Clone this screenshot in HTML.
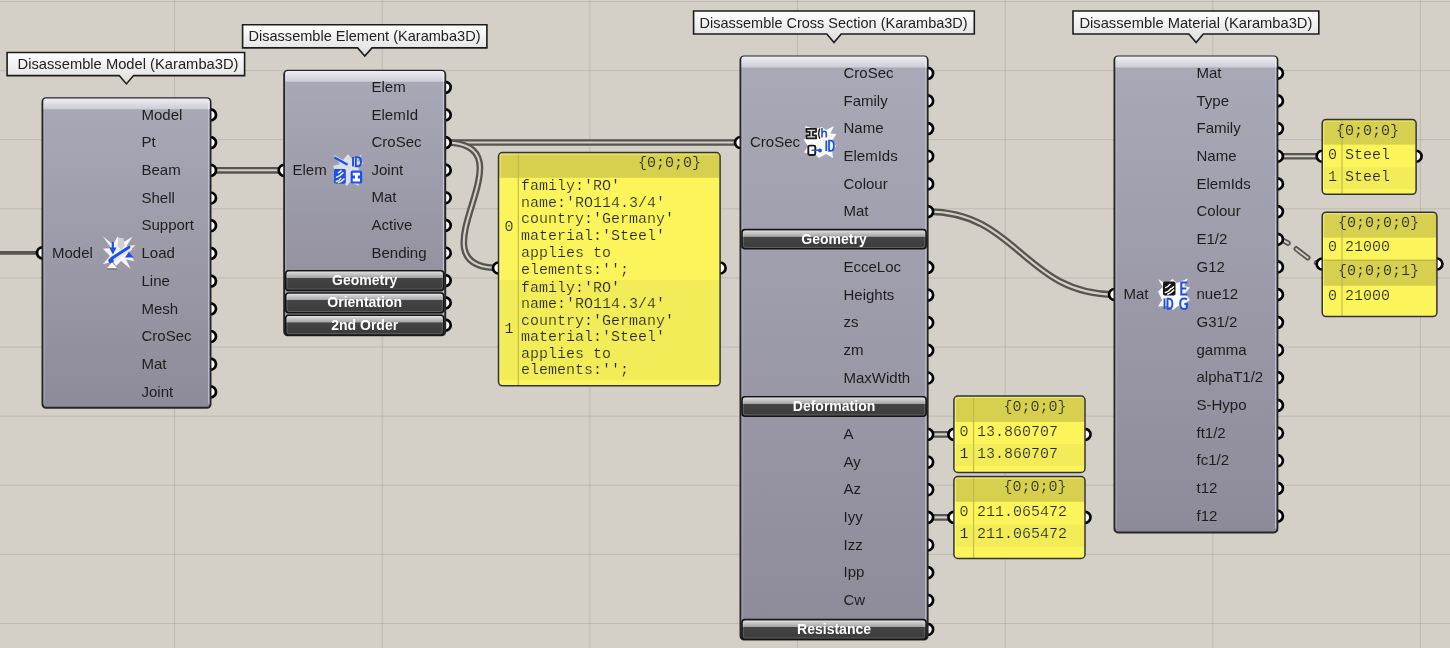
<!DOCTYPE html><html><head><meta charset="utf-8"><style>html,body{margin:0;padding:0;background:#d4d0c8;overflow:hidden}svg{display:block;will-change:transform}text{font-family:"Liberation Sans",sans-serif}.m{font-family:"Liberation Mono",monospace}</style></head><body>
<svg width="1450" height="648" viewBox="0 0 1450 648">
<defs>
<linearGradient id="tip" x1="0" y1="0" x2="0" y2="1"><stop offset="0" stop-color="#ffffff"/><stop offset="1" stop-color="#dcdcdc"/></linearGradient>
<linearGradient id="btn" x1="0" y1="0" x2="0" y2="1"><stop offset="0" stop-color="#e6e6e6"/><stop offset="0.36" stop-color="#a4a4a4"/><stop offset="0.37" stop-color="#444444"/><stop offset="1" stop-color="#3b3b3b"/></linearGradient>
<linearGradient id="hl" x1="0" y1="0" x2="0" y2="1"><stop offset="0" stop-color="#ededf1"/><stop offset="1" stop-color="#cdccd7"/></linearGradient>
</defs>
<rect width="1450" height="648" fill="#d4d0c8"/>
<rect x="174.00" y="0" width="1" height="648" fill="#000" fill-opacity="0.105"/>
<rect x="381.67" y="0" width="1" height="648" fill="#000" fill-opacity="0.105"/>
<rect x="589.34" y="0" width="1" height="648" fill="#000" fill-opacity="0.105"/>
<rect x="797.01" y="0" width="1" height="648" fill="#000" fill-opacity="0.105"/>
<rect x="1004.68" y="0" width="1" height="648" fill="#000" fill-opacity="0.105"/>
<rect x="1212.35" y="0" width="1" height="648" fill="#000" fill-opacity="0.105"/>
<rect x="1420.02" y="0" width="1" height="648" fill="#000" fill-opacity="0.105"/>
<rect x="0" y="1.00" width="1450" height="1" fill="#000" fill-opacity="0.105"/>
<rect x="0" y="70.11" width="1450" height="1" fill="#000" fill-opacity="0.105"/>
<rect x="0" y="139.22" width="1450" height="1" fill="#000" fill-opacity="0.105"/>
<rect x="0" y="208.33" width="1450" height="1" fill="#000" fill-opacity="0.105"/>
<rect x="0" y="277.44" width="1450" height="1" fill="#000" fill-opacity="0.105"/>
<rect x="0" y="346.55" width="1450" height="1" fill="#000" fill-opacity="0.105"/>
<rect x="0" y="415.66" width="1450" height="1" fill="#000" fill-opacity="0.105"/>
<rect x="0" y="484.77" width="1450" height="1" fill="#000" fill-opacity="0.105"/>
<rect x="0" y="553.88" width="1450" height="1" fill="#000" fill-opacity="0.105"/>
<rect x="0" y="622.99" width="1450" height="1" fill="#000" fill-opacity="0.105"/>
<path d="M0.00 252.80 C21.25 252.80 21.25 252.80 42.50 252.80" fill="none" stroke="#57554f" stroke-width="3.8"/>
<path d="M210.50 170.30 C247.35 170.30 247.35 170.30 284.20 170.30" fill="none" stroke="#57554f" stroke-width="6.7" stroke-linecap="round"/>
<path d="M210.50 170.30 C247.35 170.30 247.35 170.30 284.20 170.30" fill="none" stroke="#d4d0c8" stroke-width="2.1" stroke-linecap="round"/>
<path d="M445.20 142.50 C592.85 142.50 592.85 142.50 740.50 142.50" fill="none" stroke="#57554f" stroke-width="6.7" stroke-linecap="round"/>
<path d="M445.20 142.50 C592.85 142.50 592.85 142.50 740.50 142.50" fill="none" stroke="#d4d0c8" stroke-width="2.1" stroke-linecap="round"/>
<path d="M445.20 142.50 C537.20 142.50 406.50 268.00 498.50 268.00" fill="none" stroke="#57554f" stroke-width="6.7" stroke-linecap="round"/>
<path d="M445.20 142.50 C537.20 142.50 406.50 268.00 498.50 268.00" fill="none" stroke="#d4d0c8" stroke-width="2.1" stroke-linecap="round"/>
<path d="M927.60 211.55 C1017.60 211.55 1024.50 294.50 1114.50 294.50" fill="none" stroke="#57554f" stroke-width="6.7" stroke-linecap="round"/>
<path d="M927.60 211.55 C1017.60 211.55 1024.50 294.50 1114.50 294.50" fill="none" stroke="#d4d0c8" stroke-width="2.1" stroke-linecap="round"/>
<path d="M927.60 434.40 C947.60 434.40 933.90 434.40 953.90 434.40" fill="none" stroke="#57554f" stroke-width="6.7" stroke-linecap="round"/>
<path d="M927.60 434.40 C947.60 434.40 933.90 434.40 953.90 434.40" fill="none" stroke="#d4d0c8" stroke-width="2.1" stroke-linecap="round"/>
<path d="M927.60 517.35 C947.60 517.35 933.90 517.35 953.90 517.35" fill="none" stroke="#57554f" stroke-width="6.7" stroke-linecap="round"/>
<path d="M927.60 517.35 C947.60 517.35 933.90 517.35 953.90 517.35" fill="none" stroke="#d4d0c8" stroke-width="2.1" stroke-linecap="round"/>
<path d="M1277.40 156.24 C1299.80 156.24 1299.80 156.24 1322.20 156.24" fill="none" stroke="#57554f" stroke-width="6.7" stroke-linecap="round"/>
<path d="M1277.40 156.24 C1299.80 156.24 1299.80 156.24 1322.20 156.24" fill="none" stroke="#d4d0c8" stroke-width="2.1" stroke-linecap="round"/>
<path d="M1277.40 239.30 C1290.40 239.30 1309.20 264.00 1322.20 264.00" fill="none" stroke="#57554f" stroke-width="5.4" stroke-dasharray="14.4 10.1" stroke-dashoffset="3" stroke-linecap="round"/>
<path d="M1277.40 239.30 C1290.40 239.30 1309.20 264.00 1322.20 264.00" fill="none" stroke="#d4d0c8" stroke-width="1.9" stroke-dasharray="14.4 10.1" stroke-dashoffset="3" stroke-linecap="round"/>
<linearGradient id="body1" x1="0" y1="0" x2="0" y2="1"><stop offset="0" stop-color="#aaa9b7"/><stop offset="1" stop-color="#8d8b99"/></linearGradient>
<circle cx="210.50" cy="114.90" r="5.5" fill="#fff" stroke="#000" stroke-width="2.7"/>
<circle cx="210.50" cy="142.60" r="5.5" fill="#fff" stroke="#000" stroke-width="2.7"/>
<circle cx="210.50" cy="170.30" r="5.5" fill="#fff" stroke="#000" stroke-width="2.7"/>
<circle cx="210.50" cy="198.00" r="5.5" fill="#fff" stroke="#000" stroke-width="2.7"/>
<circle cx="210.50" cy="225.70" r="5.5" fill="#fff" stroke="#000" stroke-width="2.7"/>
<circle cx="210.50" cy="253.40" r="5.5" fill="#fff" stroke="#000" stroke-width="2.7"/>
<circle cx="210.50" cy="281.10" r="5.5" fill="#fff" stroke="#000" stroke-width="2.7"/>
<circle cx="210.50" cy="308.80" r="5.5" fill="#fff" stroke="#000" stroke-width="2.7"/>
<circle cx="210.50" cy="336.50" r="5.5" fill="#fff" stroke="#000" stroke-width="2.7"/>
<circle cx="210.50" cy="364.20" r="5.5" fill="#fff" stroke="#000" stroke-width="2.7"/>
<circle cx="210.50" cy="391.90" r="5.5" fill="#fff" stroke="#000" stroke-width="2.7"/>
<circle cx="42.50" cy="252.80" r="5.5" fill="#fff" stroke="#000" stroke-width="2.7"/>
<rect x="42.50" y="98.30" width="168.00" height="309.50" rx="3.5" fill="url(#body1)" stroke="#262626" stroke-width="2"/>
<path d="M43.40 109.30 v-8.20 q0 -2.6 2.6 -2.6 h161.00 q2.6 0 2.6 2.6 v8.20 z" fill="url(#hl)"/>
<rect x="43.50" y="109.30" width="1" height="294.50" fill="#c8c7d4" opacity="0.6"/>
<rect x="208.10" y="109.30" width="1.3" height="294.50" fill="#c6c5d3" opacity="0.85"/>
<rect x="208.10" y="100.80" width="1.3" height="8.5" fill="#f0f0f4" opacity="0.85"/>
<text x="141.50" y="119.60" font-size="15" fill="#1e1e1e">Model</text>
<text x="141.50" y="147.30" font-size="15" fill="#1e1e1e">Pt</text>
<text x="141.50" y="175.00" font-size="15" fill="#1e1e1e">Beam</text>
<text x="141.50" y="202.70" font-size="15" fill="#1e1e1e">Shell</text>
<text x="141.50" y="230.40" font-size="15" fill="#1e1e1e">Support</text>
<text x="141.50" y="258.10" font-size="15" fill="#1e1e1e">Load</text>
<text x="141.50" y="285.80" font-size="15" fill="#1e1e1e">Line</text>
<text x="141.50" y="313.50" font-size="15" fill="#1e1e1e">Mesh</text>
<text x="141.50" y="341.20" font-size="15" fill="#1e1e1e">CroSec</text>
<text x="141.50" y="368.90" font-size="15" fill="#1e1e1e">Mat</text>
<text x="141.50" y="396.60" font-size="15" fill="#1e1e1e">Joint</text>
<text x="52.00" y="257.50" font-size="15" fill="#1e1e1e">Model</text>
<polygon points="102.9,236.6 113,244.5 117.8,236.2 121.5,243.5 132.6,236.6 126.5,246 135.7,245.3 128,251.5 134.5,261 126,259.5 130.7,269 121,261 116,266 113.5,262 102.9,264 110,256 102.9,248.7 111,248" fill="#fff" opacity="0.9"/>
<polygon points="118.5,238 123.5,238 124.5,246 121,250 117.5,246" fill="#d0d0d4"/>
<line x1="112.8" y1="242" x2="112.8" y2="249" stroke="#1c4ff2" stroke-width="2.2"/>
<polygon points="109.2,247.6 116.6,247.6 112.9,254.4" fill="#1c4ff2"/>
<line x1="112" y1="260" x2="129.5" y2="248.5" stroke="#e8e8ec" stroke-width="5.2" stroke-linecap="round"/>
<line x1="112" y1="258.2" x2="128.9" y2="247.2" stroke="#1c4ff2" stroke-width="3" stroke-linecap="round"/>
<circle cx="111" cy="260.7" r="2.6" fill="#1c4ff2"/>
<polygon points="125,257.6 133.6,257.6 128.8,251.8" fill="#1c4ff2"/>
<polygon points="107,268.2 117,268.2 112,262.2" fill="#fff"/>
<line x1="107" y1="269" x2="117" y2="269" stroke="#555" stroke-opacity="0.6" stroke-width="1.2"/>
<linearGradient id="body2" x1="0" y1="0" x2="0" y2="1"><stop offset="0" stop-color="#aaa9b7"/><stop offset="1" stop-color="#8d8b99"/></linearGradient>
<circle cx="445.20" cy="87.30" r="5.5" fill="#fff" stroke="#000" stroke-width="2.7"/>
<circle cx="445.20" cy="114.92" r="5.5" fill="#fff" stroke="#000" stroke-width="2.7"/>
<circle cx="445.20" cy="142.54" r="5.5" fill="#fff" stroke="#000" stroke-width="2.7"/>
<circle cx="445.20" cy="170.16" r="5.5" fill="#fff" stroke="#000" stroke-width="2.7"/>
<circle cx="445.20" cy="197.78" r="5.5" fill="#fff" stroke="#000" stroke-width="2.7"/>
<circle cx="445.20" cy="225.40" r="5.5" fill="#fff" stroke="#000" stroke-width="2.7"/>
<circle cx="445.20" cy="253.02" r="5.5" fill="#fff" stroke="#000" stroke-width="2.7"/>
<circle cx="445.20" cy="280.55" r="5.5" fill="#fff" stroke="#000" stroke-width="2.7"/>
<circle cx="445.20" cy="302.85" r="5.5" fill="#fff" stroke="#000" stroke-width="2.7"/>
<circle cx="445.20" cy="325.15" r="5.5" fill="#fff" stroke="#000" stroke-width="2.7"/>
<circle cx="284.20" cy="170.30" r="5.5" fill="#fff" stroke="#000" stroke-width="2.7"/>
<rect x="284.20" y="70.80" width="161.00" height="264.40" rx="3.5" fill="url(#body2)" stroke="#262626" stroke-width="2"/>
<path d="M285.10 81.80 v-8.20 q0 -2.6 2.6 -2.6 h154.00 q2.6 0 2.6 2.6 v8.20 z" fill="url(#hl)"/>
<rect x="285.20" y="81.80" width="1" height="249.40" fill="#c8c7d4" opacity="0.6"/>
<rect x="442.80" y="81.80" width="1.3" height="249.40" fill="#c6c5d3" opacity="0.85"/>
<rect x="442.80" y="73.30" width="1.3" height="8.5" fill="#f0f0f4" opacity="0.85"/>
<text x="371.50" y="92.00" font-size="15" fill="#1e1e1e">Elem</text>
<text x="371.50" y="119.62" font-size="15" fill="#1e1e1e">ElemId</text>
<text x="371.50" y="147.24" font-size="15" fill="#1e1e1e">CroSec</text>
<text x="371.50" y="174.86" font-size="15" fill="#1e1e1e">Joint</text>
<text x="371.50" y="202.48" font-size="15" fill="#1e1e1e">Mat</text>
<text x="371.50" y="230.10" font-size="15" fill="#1e1e1e">Active</text>
<text x="371.50" y="257.72" font-size="15" fill="#1e1e1e">Bending</text>
<rect x="285.70" y="270.70" width="158.00" height="19.70" rx="3" fill="url(#btn)" stroke="#141414" stroke-width="1.6"/>
<rect x="287.00" y="272.00" width="155.40" height="17.10" rx="2" fill="none" stroke="#ffffff" stroke-opacity="0.18" stroke-width="1"/>
<text x="364.70" y="284.95" font-size="14" font-weight="bold" fill="#fff" text-anchor="middle">Geometry</text>
<rect x="285.70" y="293.00" width="158.00" height="19.70" rx="3" fill="url(#btn)" stroke="#141414" stroke-width="1.6"/>
<rect x="287.00" y="294.30" width="155.40" height="17.10" rx="2" fill="none" stroke="#ffffff" stroke-opacity="0.18" stroke-width="1"/>
<text x="364.70" y="307.25" font-size="14" font-weight="bold" fill="#fff" text-anchor="middle">Orientation</text>
<rect x="285.70" y="315.30" width="158.00" height="19.70" rx="3" fill="url(#btn)" stroke="#141414" stroke-width="1.6"/>
<rect x="287.00" y="316.60" width="155.40" height="17.10" rx="2" fill="none" stroke="#ffffff" stroke-opacity="0.18" stroke-width="1"/>
<text x="364.70" y="329.55" font-size="14" font-weight="bold" fill="#fff" text-anchor="middle">2nd Order</text>
<text x="292.50" y="175.00" font-size="15" fill="#1e1e1e">Elem</text>
<polygon points="333.5,154.5 343,160 348,154 352,159 362.5,154.5 357,161 364,163 358,166 361,176 357,177 359,186 350,182 347,186 343,182 335,184 337,176 333,166 340,164" fill="#f4f4f6" opacity="0.75"/>
<line x1="334.6" y1="157.6" x2="347.6" y2="164.8" stroke="#1c4ff2" stroke-width="2.3"/>
<path d="M353 157 v9.5 M355.8 157.2 h2 q3.2 0 3.2 4.55 q0 4.55 -3.2 4.55 h-2 z" fill="none" stroke="#1c4ff2" stroke-width="1.9"/>
<rect x="334.6" y="169.6" width="11.4" height="14.2" rx="1.2" fill="#1a1a1a" opacity="0.5"/>
<rect x="334" y="169" width="11.4" height="14.2" rx="1.2" fill="#1c4ff2"/>
<path d="M336.3 181.5 q2.5 -0.5 4.5 -3.2 M336.5 177.3 q3 -0.8 6.5 -4.6 M338.5 182.6 q3 -0.8 5.5 -3.6 M338.3 172.8 q1.6 -0.6 2.8 -2" fill="none" stroke="#fff" stroke-width="1.4" stroke-linecap="round"/>
<rect x="350.6" y="170.6" width="11.6" height="13" rx="2.2" fill="#1c4ff2"/>
<path d="M352.8 172.8 h7.2 v2.8 h-2.2 v3 h2.2 v2.9 h-7.2 v-2.9 h2.2 v-3 h-2.2 z" fill="#fff"/>
<linearGradient id="body3" x1="0" y1="0" x2="0" y2="1"><stop offset="0" stop-color="#aaa9b7"/><stop offset="1" stop-color="#8d8b99"/></linearGradient>
<circle cx="927.60" cy="73.30" r="5.5" fill="#fff" stroke="#000" stroke-width="2.7"/>
<circle cx="927.60" cy="100.95" r="5.5" fill="#fff" stroke="#000" stroke-width="2.7"/>
<circle cx="927.60" cy="128.60" r="5.5" fill="#fff" stroke="#000" stroke-width="2.7"/>
<circle cx="927.60" cy="156.25" r="5.5" fill="#fff" stroke="#000" stroke-width="2.7"/>
<circle cx="927.60" cy="183.90" r="5.5" fill="#fff" stroke="#000" stroke-width="2.7"/>
<circle cx="927.60" cy="211.55" r="5.5" fill="#fff" stroke="#000" stroke-width="2.7"/>
<circle cx="927.60" cy="267.40" r="5.5" fill="#fff" stroke="#000" stroke-width="2.7"/>
<circle cx="927.60" cy="295.05" r="5.5" fill="#fff" stroke="#000" stroke-width="2.7"/>
<circle cx="927.60" cy="322.70" r="5.5" fill="#fff" stroke="#000" stroke-width="2.7"/>
<circle cx="927.60" cy="350.35" r="5.5" fill="#fff" stroke="#000" stroke-width="2.7"/>
<circle cx="927.60" cy="378.00" r="5.5" fill="#fff" stroke="#000" stroke-width="2.7"/>
<circle cx="927.60" cy="434.40" r="5.5" fill="#fff" stroke="#000" stroke-width="2.7"/>
<circle cx="927.60" cy="462.05" r="5.5" fill="#fff" stroke="#000" stroke-width="2.7"/>
<circle cx="927.60" cy="489.70" r="5.5" fill="#fff" stroke="#000" stroke-width="2.7"/>
<circle cx="927.60" cy="517.35" r="5.5" fill="#fff" stroke="#000" stroke-width="2.7"/>
<circle cx="927.60" cy="545.00" r="5.5" fill="#fff" stroke="#000" stroke-width="2.7"/>
<circle cx="927.60" cy="572.65" r="5.5" fill="#fff" stroke="#000" stroke-width="2.7"/>
<circle cx="927.60" cy="600.30" r="5.5" fill="#fff" stroke="#000" stroke-width="2.7"/>
<circle cx="927.60" cy="629.45" r="5.5" fill="#fff" stroke="#000" stroke-width="2.7"/>
<circle cx="740.50" cy="142.50" r="5.5" fill="#fff" stroke="#000" stroke-width="2.7"/>
<rect x="740.50" y="56.40" width="187.10" height="583.20" rx="3.5" fill="url(#body3)" stroke="#262626" stroke-width="2"/>
<path d="M741.40 67.40 v-8.20 q0 -2.6 2.6 -2.6 h180.10 q2.6 0 2.6 2.6 v8.20 z" fill="url(#hl)"/>
<rect x="741.50" y="67.40" width="1" height="568.20" fill="#c8c7d4" opacity="0.6"/>
<rect x="925.20" y="67.40" width="1.3" height="568.20" fill="#c6c5d3" opacity="0.85"/>
<rect x="925.20" y="58.90" width="1.3" height="8.5" fill="#f0f0f4" opacity="0.85"/>
<text x="843.50" y="78.00" font-size="15" fill="#1e1e1e">CroSec</text>
<text x="843.50" y="105.65" font-size="15" fill="#1e1e1e">Family</text>
<text x="843.50" y="133.30" font-size="15" fill="#1e1e1e">Name</text>
<text x="843.50" y="160.95" font-size="15" fill="#1e1e1e">ElemIds</text>
<text x="843.50" y="188.60" font-size="15" fill="#1e1e1e">Colour</text>
<text x="843.50" y="216.25" font-size="15" fill="#1e1e1e">Mat</text>
<rect x="742.00" y="229.60" width="184.10" height="19.10" rx="3" fill="url(#btn)" stroke="#141414" stroke-width="1.6"/>
<rect x="743.30" y="230.90" width="181.50" height="16.50" rx="2" fill="none" stroke="#ffffff" stroke-opacity="0.18" stroke-width="1"/>
<text x="834.05" y="243.55" font-size="14" font-weight="bold" fill="#fff" text-anchor="middle">Geometry</text>
<text x="843.50" y="272.10" font-size="15" fill="#1e1e1e">EcceLoc</text>
<text x="843.50" y="299.75" font-size="15" fill="#1e1e1e">Heights</text>
<text x="843.50" y="327.40" font-size="15" fill="#1e1e1e">zs</text>
<text x="843.50" y="355.05" font-size="15" fill="#1e1e1e">zm</text>
<text x="843.50" y="382.70" font-size="15" fill="#1e1e1e">MaxWidth</text>
<rect x="742.00" y="396.70" width="184.10" height="19.50" rx="3" fill="url(#btn)" stroke="#141414" stroke-width="1.6"/>
<rect x="743.30" y="398.00" width="181.50" height="16.90" rx="2" fill="none" stroke="#ffffff" stroke-opacity="0.18" stroke-width="1"/>
<text x="834.05" y="410.85" font-size="14" font-weight="bold" fill="#fff" text-anchor="middle">Deformation</text>
<text x="843.50" y="439.10" font-size="15" fill="#1e1e1e">A</text>
<text x="843.50" y="466.75" font-size="15" fill="#1e1e1e">Ay</text>
<text x="843.50" y="494.40" font-size="15" fill="#1e1e1e">Az</text>
<text x="843.50" y="522.05" font-size="15" fill="#1e1e1e">Iyy</text>
<text x="843.50" y="549.70" font-size="15" fill="#1e1e1e">Izz</text>
<text x="843.50" y="577.35" font-size="15" fill="#1e1e1e">Ipp</text>
<text x="843.50" y="605.00" font-size="15" fill="#1e1e1e">Cw</text>
<rect x="742.00" y="619.60" width="184.10" height="19.70" rx="3" fill="url(#btn)" stroke="#141414" stroke-width="1.6"/>
<rect x="743.30" y="620.90" width="181.50" height="17.10" rx="2" fill="none" stroke="#ffffff" stroke-opacity="0.18" stroke-width="1"/>
<text x="834.05" y="633.85" font-size="14" font-weight="bold" fill="#fff" text-anchor="middle">Resistance</text>
<text x="750.00" y="147.20" font-size="15" fill="#1e1e1e">CroSec</text>
<polygon points="805,126 815,129 822,127 826,130 834,126 830.5,133.5 836.5,134 832.5,140 836,146.5 832,150 833,158 826,154 819,158 816,155 804,152.5 808,146 804,140 808,134" fill="#fff" opacity="0.95"/>
<path d="M806.5 128.8 h9.6 v3 h-3.2 v3.6 h3.2 v3 h-9.6 v-3 h3.2 v-3.6 h-3.2 z" fill="#dcdcdc" stroke="#1a1a1a" stroke-width="1.7" stroke-linejoin="round"/>
<path d="M819.8 128.6 q-2.3 5 0 10" fill="none" stroke="#1a1a1a" stroke-width="1.4"/>
<path d="M822 128 v9.5 M822 132.8 q0.8 -1.5 2.3 -1.5 q2 0 2 2 v4.2" fill="none" stroke="#1c4ff2" stroke-width="1.6"/>
<rect x="808.3" y="145.6" width="7" height="9.4" rx="1.4" fill="#fff" stroke="#1a1a1a" stroke-width="1.9"/>
<line x1="811.5" y1="150.2" x2="819" y2="150.2" stroke="#1c4ff2" stroke-width="1.4"/>
<circle cx="820" cy="150.4" r="2" fill="#1c4ff2"/>
<path d="M826.3 140.5 v10.5 M829 140.7 h1.6 q3.3 0 3.3 5.05 q0 5.05 -3.3 5.05 h-1.6 z" fill="none" stroke="#1c4ff2" stroke-width="1.8"/>
<linearGradient id="body4" x1="0" y1="0" x2="0" y2="1"><stop offset="0" stop-color="#aaa9b7"/><stop offset="1" stop-color="#8d8b99"/></linearGradient>
<circle cx="1277.40" cy="73.20" r="5.5" fill="#fff" stroke="#000" stroke-width="2.7"/>
<circle cx="1277.40" cy="100.88" r="5.5" fill="#fff" stroke="#000" stroke-width="2.7"/>
<circle cx="1277.40" cy="128.56" r="5.5" fill="#fff" stroke="#000" stroke-width="2.7"/>
<circle cx="1277.40" cy="156.24" r="5.5" fill="#fff" stroke="#000" stroke-width="2.7"/>
<circle cx="1277.40" cy="183.92" r="5.5" fill="#fff" stroke="#000" stroke-width="2.7"/>
<circle cx="1277.40" cy="211.60" r="5.5" fill="#fff" stroke="#000" stroke-width="2.7"/>
<circle cx="1277.40" cy="239.28" r="5.5" fill="#fff" stroke="#000" stroke-width="2.7"/>
<circle cx="1277.40" cy="266.96" r="5.5" fill="#fff" stroke="#000" stroke-width="2.7"/>
<circle cx="1277.40" cy="294.64" r="5.5" fill="#fff" stroke="#000" stroke-width="2.7"/>
<circle cx="1277.40" cy="322.32" r="5.5" fill="#fff" stroke="#000" stroke-width="2.7"/>
<circle cx="1277.40" cy="350.00" r="5.5" fill="#fff" stroke="#000" stroke-width="2.7"/>
<circle cx="1277.40" cy="377.68" r="5.5" fill="#fff" stroke="#000" stroke-width="2.7"/>
<circle cx="1277.40" cy="405.36" r="5.5" fill="#fff" stroke="#000" stroke-width="2.7"/>
<circle cx="1277.40" cy="433.04" r="5.5" fill="#fff" stroke="#000" stroke-width="2.7"/>
<circle cx="1277.40" cy="460.72" r="5.5" fill="#fff" stroke="#000" stroke-width="2.7"/>
<circle cx="1277.40" cy="488.40" r="5.5" fill="#fff" stroke="#000" stroke-width="2.7"/>
<circle cx="1277.40" cy="516.08" r="5.5" fill="#fff" stroke="#000" stroke-width="2.7"/>
<circle cx="1114.50" cy="294.50" r="5.5" fill="#fff" stroke="#000" stroke-width="2.7"/>
<rect x="1114.50" y="56.40" width="162.90" height="476.00" rx="3.5" fill="url(#body4)" stroke="#262626" stroke-width="2"/>
<path d="M1115.40 67.40 v-8.20 q0 -2.6 2.6 -2.6 h155.90 q2.6 0 2.6 2.6 v8.20 z" fill="url(#hl)"/>
<rect x="1115.50" y="67.40" width="1" height="461.00" fill="#c8c7d4" opacity="0.6"/>
<rect x="1275.00" y="67.40" width="1.3" height="461.00" fill="#c6c5d3" opacity="0.85"/>
<rect x="1275.00" y="58.90" width="1.3" height="8.5" fill="#f0f0f4" opacity="0.85"/>
<text x="1196.50" y="77.90" font-size="15" fill="#1e1e1e">Mat</text>
<text x="1196.50" y="105.58" font-size="15" fill="#1e1e1e">Type</text>
<text x="1196.50" y="133.26" font-size="15" fill="#1e1e1e">Family</text>
<text x="1196.50" y="160.94" font-size="15" fill="#1e1e1e">Name</text>
<text x="1196.50" y="188.62" font-size="15" fill="#1e1e1e">ElemIds</text>
<text x="1196.50" y="216.30" font-size="15" fill="#1e1e1e">Colour</text>
<text x="1196.50" y="243.98" font-size="15" fill="#1e1e1e">E1/2</text>
<text x="1196.50" y="271.66" font-size="15" fill="#1e1e1e">G12</text>
<text x="1196.50" y="299.34" font-size="15" fill="#1e1e1e">nue12</text>
<text x="1196.50" y="327.02" font-size="15" fill="#1e1e1e">G31/2</text>
<text x="1196.50" y="354.70" font-size="15" fill="#1e1e1e">gamma</text>
<text x="1196.50" y="382.38" font-size="15" fill="#1e1e1e">alphaT1/2</text>
<text x="1196.50" y="410.06" font-size="15" fill="#1e1e1e">S-Hypo</text>
<text x="1196.50" y="437.74" font-size="15" fill="#1e1e1e">ft1/2</text>
<text x="1196.50" y="465.42" font-size="15" fill="#1e1e1e">fc1/2</text>
<text x="1196.50" y="493.10" font-size="15" fill="#1e1e1e">t12</text>
<text x="1196.50" y="520.78" font-size="15" fill="#1e1e1e">f12</text>
<text x="1123.50" y="299.20" font-size="15" fill="#1e1e1e">Mat</text>
<polygon points="1158,279 1166,284 1172.5,279 1177,283 1188,278.5 1184,286 1190,287.5 1185,293 1190,300 1185,303 1186.5,309.5 1178,306 1173,310 1168,306 1158,306.5 1162,300 1158,291.5 1163,287" fill="#fff" opacity="0.95"/>
<rect x="1163" y="281.5" width="12.5" height="14" rx="1.8" fill="#161616"/>
<path d="M1165.3 292.5 q3 -0.6 5.5 -3.8 M1165.6 287.6 q2.5 -0.6 4.5 -3.4 M1167.8 294.2 q3 -0.8 6 -4.2 M1170.6 289 q1.6 -0.5 3 -2.2" fill="none" stroke="#fff" stroke-width="1.4" stroke-linecap="round"/>
<path d="M1187.3 282.5 h-6 v12 h6 M1181.3 288.5 h5" fill="none" stroke="#1c4ff2" stroke-width="2"/>
<path d="M1164.5 298.5 v10.5 M1167.5 298.7 h1.5 q3.4 0 3.4 5.05 q0 5.05 -3.4 5.05 h-1.5 z" fill="none" stroke="#1c4ff2" stroke-width="1.9"/>
<path d="M1187 299.5 q-1 -1 -3 -1 q-3.8 0 -3.8 5.25 q0 5.25 3.8 5.25 q3 0 3 -2.5 v-2.5 h-2.6" fill="none" stroke="#1c4ff2" stroke-width="2"/>
<g>
<circle cx="498.50" cy="268.00" r="5.5" fill="#fff" stroke="#000" stroke-width="2.7"/>
<circle cx="720.10" cy="268.00" r="5.5" fill="#fff" stroke="#000" stroke-width="2.7"/>
<rect x="498.50" y="152.60" width="221.60" height="233.20" rx="4" fill="#fbf55b"/>
<clipPath id="pc651"><rect x="499.20" y="153.30" width="220.20" height="231.80" rx="3.3"/></clipPath>
<g clip-path="url(#pc651)">
<rect x="498.50" y="152.50" width="221.60" height="25.30" fill="#d6d04e"/>
<rect x="498.50" y="280.00" width="221.60" height="100.20" fill="#f1ec57"/>
<rect x="517.80" y="152.60" width="1" height="233.20" fill="#bcb646"/>
<path d="M500.10 382.80 V156.60 Q500.10 154.20 502.50 154.20 H717.10" fill="none" stroke="#fffbb0" stroke-opacity="0.55" stroke-width="1"/>
</g>
<rect x="498.50" y="152.60" width="221.60" height="233.20" rx="4" fill="none" stroke="#333" stroke-width="1.5"/>
<text class="m" x="701.00" y="166.80" font-size="15" fill="#262618" stroke="#d6d04e" stroke-width="0.2" text-anchor="end">{0;0;0}</text>
<text class="m" x="509.00" y="231.30" font-size="15" fill="#262618" stroke="#fbf55b" stroke-width="0.2" text-anchor="middle">0</text>
<text class="m" x="509.00" y="332.80" font-size="15" fill="#262618" stroke="#f1ec57" stroke-width="0.2" text-anchor="middle">1</text>
<text class="m" x="521.10" y="190.00" font-size="15" fill="#262618" stroke="#fbf55b" stroke-width="0.2" text-anchor="start">family:'RO'</text>
<text class="m" x="521.10" y="291.50" font-size="15" fill="#262618" stroke="#f1ec57" stroke-width="0.2" text-anchor="start">family:'RO'</text>
<text class="m" x="521.10" y="206.70" font-size="15" fill="#262618" stroke="#fbf55b" stroke-width="0.2" text-anchor="start">name:'RO114.3/4'</text>
<text class="m" x="521.10" y="308.00" font-size="15" fill="#262618" stroke="#f1ec57" stroke-width="0.2" text-anchor="start">name:'RO114.3/4'</text>
<text class="m" x="521.10" y="223.40" font-size="15" fill="#262618" stroke="#fbf55b" stroke-width="0.2" text-anchor="start">country:'Germany'</text>
<text class="m" x="521.10" y="324.50" font-size="15" fill="#262618" stroke="#f1ec57" stroke-width="0.2" text-anchor="start">country:'Germany'</text>
<text class="m" x="521.10" y="240.10" font-size="15" fill="#262618" stroke="#fbf55b" stroke-width="0.2" text-anchor="start">material:'Steel'</text>
<text class="m" x="521.10" y="341.00" font-size="15" fill="#262618" stroke="#f1ec57" stroke-width="0.2" text-anchor="start">material:'Steel'</text>
<text class="m" x="521.10" y="256.80" font-size="15" fill="#262618" stroke="#fbf55b" stroke-width="0.2" text-anchor="start">applies to</text>
<text class="m" x="521.10" y="357.50" font-size="15" fill="#262618" stroke="#f1ec57" stroke-width="0.2" text-anchor="start">applies to</text>
<text class="m" x="521.10" y="273.50" font-size="15" fill="#262618" stroke="#fbf55b" stroke-width="0.2" text-anchor="start">elements:'';</text>
<text class="m" x="521.10" y="374.00" font-size="15" fill="#262618" stroke="#f1ec57" stroke-width="0.2" text-anchor="start">elements:'';</text>
</g>
<g>
<circle cx="953.90" cy="434.40" r="5.5" fill="#fff" stroke="#000" stroke-width="2.7"/>
<circle cx="1085.00" cy="434.40" r="5.5" fill="#fff" stroke="#000" stroke-width="2.7"/>
<rect x="953.90" y="396.00" width="131.10" height="76.40" rx="4" fill="#fbf55b"/>
<clipPath id="pc1349"><rect x="954.60" y="396.70" width="129.70" height="75.00" rx="3.3"/></clipPath>
<g clip-path="url(#pc1349)">
<rect x="953.90" y="396.00" width="131.10" height="25.90" fill="#d6d04e"/>
<rect x="953.90" y="444.00" width="131.10" height="22.00" fill="#f1ec57"/>
<rect x="973.10" y="396.00" width="1" height="76.40" fill="#bcb646"/>
<path d="M955.50 469.40 V400.00 Q955.50 397.60 957.90 397.60 H1082.00" fill="none" stroke="#fffbb0" stroke-opacity="0.55" stroke-width="1"/>
</g>
<rect x="953.90" y="396.00" width="131.10" height="76.40" rx="4" fill="none" stroke="#333" stroke-width="1.5"/>
<text class="m" x="1066.60" y="410.80" font-size="15" fill="#262618" stroke="#d6d04e" stroke-width="0.2" text-anchor="end">{0;0;0}</text>
<text class="m" x="964.00" y="436.30" font-size="15" fill="#262618" stroke="#fbf55b" stroke-width="0.2" text-anchor="middle">0</text>
<text class="m" x="964.00" y="458.30" font-size="15" fill="#262618" stroke="#f1ec57" stroke-width="0.2" text-anchor="middle">1</text>
<text class="m" x="977.00" y="436.30" font-size="15" fill="#262618" stroke="#fbf55b" stroke-width="0.2" text-anchor="start">13.860707</text>
<text class="m" x="977.00" y="458.30" font-size="15" fill="#262618" stroke="#f1ec57" stroke-width="0.2" text-anchor="start">13.860707</text>
</g>
<g>
<circle cx="953.90" cy="517.35" r="5.5" fill="#fff" stroke="#000" stroke-width="2.7"/>
<circle cx="1085.00" cy="517.35" r="5.5" fill="#fff" stroke="#000" stroke-width="2.7"/>
<rect x="953.90" y="476.60" width="131.10" height="81.90" rx="4" fill="#fbf55b"/>
<clipPath id="pc1430"><rect x="954.60" y="477.30" width="129.70" height="80.50" rx="3.3"/></clipPath>
<g clip-path="url(#pc1430)">
<rect x="953.90" y="476.00" width="131.10" height="25.80" fill="#d6d04e"/>
<rect x="953.90" y="524.50" width="131.10" height="22.10" fill="#f1ec57"/>
<rect x="973.10" y="476.60" width="1" height="81.90" fill="#bcb646"/>
<path d="M955.50 555.50 V480.60 Q955.50 478.20 957.90 478.20 H1082.00" fill="none" stroke="#fffbb0" stroke-opacity="0.55" stroke-width="1"/>
</g>
<rect x="953.90" y="476.60" width="131.10" height="81.90" rx="4" fill="none" stroke="#333" stroke-width="1.5"/>
<text class="m" x="1066.60" y="490.80" font-size="15" fill="#262618" stroke="#d6d04e" stroke-width="0.2" text-anchor="end">{0;0;0}</text>
<text class="m" x="964.00" y="515.50" font-size="15" fill="#262618" stroke="#fbf55b" stroke-width="0.2" text-anchor="middle">0</text>
<text class="m" x="964.00" y="537.50" font-size="15" fill="#262618" stroke="#f1ec57" stroke-width="0.2" text-anchor="middle">1</text>
<text class="m" x="977.00" y="515.50" font-size="15" fill="#262618" stroke="#fbf55b" stroke-width="0.2" text-anchor="start">211.065472</text>
<text class="m" x="977.00" y="537.50" font-size="15" fill="#262618" stroke="#f1ec57" stroke-width="0.2" text-anchor="start">211.065472</text>
</g>
<g>
<circle cx="1322.20" cy="156.24" r="5.5" fill="#fff" stroke="#000" stroke-width="2.7"/>
<circle cx="1416.10" cy="156.24" r="5.5" fill="#fff" stroke="#000" stroke-width="2.7"/>
<rect x="1322.20" y="119.40" width="93.90" height="74.90" rx="4" fill="#fbf55b"/>
<clipPath id="pc1441"><rect x="1322.90" y="120.10" width="92.50" height="73.50" rx="3.3"/></clipPath>
<g clip-path="url(#pc1441)">
<rect x="1322.20" y="119.30" width="93.90" height="25.30" fill="#d6d04e"/>
<rect x="1322.20" y="167.40" width="93.90" height="21.60" fill="#f1ec57"/>
<rect x="1341.50" y="119.40" width="1" height="74.90" fill="#bcb646"/>
<path d="M1323.80 191.30 V123.40 Q1323.80 121.00 1326.20 121.00 H1413.10" fill="none" stroke="#fffbb0" stroke-opacity="0.55" stroke-width="1"/>
</g>
<rect x="1322.20" y="119.40" width="93.90" height="74.90" rx="4" fill="none" stroke="#333" stroke-width="1.5"/>
<text class="m" x="1367.50" y="134.70" font-size="15" fill="#262618" stroke="#d6d04e" stroke-width="0.2" text-anchor="middle">{0;0;0}</text>
<text class="m" x="1332.50" y="159.40" font-size="15" fill="#262618" stroke="#fbf55b" stroke-width="0.2" text-anchor="middle">0</text>
<text class="m" x="1332.50" y="181.40" font-size="15" fill="#262618" stroke="#f1ec57" stroke-width="0.2" text-anchor="middle">1</text>
<text class="m" x="1345.00" y="159.40" font-size="15" fill="#262618" stroke="#fbf55b" stroke-width="0.2" text-anchor="start">Steel</text>
<text class="m" x="1345.00" y="181.40" font-size="15" fill="#262618" stroke="#f1ec57" stroke-width="0.2" text-anchor="start">Steel</text>
</g>
<g>
<circle cx="1322.20" cy="264.00" r="5.5" fill="#fff" stroke="#000" stroke-width="2.7"/>
<circle cx="1436.90" cy="264.00" r="5.5" fill="#fff" stroke="#000" stroke-width="2.7"/>
<rect x="1322.20" y="212.20" width="114.70" height="104.40" rx="4" fill="#fbf55b"/>
<clipPath id="pc1534"><rect x="1322.90" y="212.90" width="113.30" height="103.00" rx="3.3"/></clipPath>
<g clip-path="url(#pc1534)">
<rect x="1322.20" y="212.20" width="114.70" height="25.50" fill="#d6d04e"/>
<rect x="1322.20" y="260.00" width="114.70" height="25.80" fill="#d6d04e"/>
<rect x="1322.20" y="259.60" width="114.70" height="1.20" fill="#b9b347"/>
<rect x="1341.50" y="212.20" width="1" height="104.40" fill="#bcb646"/>
<path d="M1323.80 313.60 V216.20 Q1323.80 213.80 1326.20 213.80 H1433.90" fill="none" stroke="#fffbb0" stroke-opacity="0.55" stroke-width="1"/>
</g>
<rect x="1322.20" y="212.20" width="114.70" height="104.40" rx="4" fill="none" stroke="#333" stroke-width="1.5"/>
<text class="m" x="1378.50" y="226.80" font-size="15" fill="#262618" stroke="#d6d04e" stroke-width="0.2" text-anchor="middle">{0;0;0;0}</text>
<text class="m" x="1332.50" y="251.00" font-size="15" fill="#262618" stroke="#fbf55b" stroke-width="0.2" text-anchor="middle">0</text>
<text class="m" x="1345.00" y="251.00" font-size="15" fill="#262618" stroke="#fbf55b" stroke-width="0.2" text-anchor="start">21000</text>
<text class="m" x="1378.50" y="274.80" font-size="15" fill="#262618" stroke="#d6d04e" stroke-width="0.2" text-anchor="middle">{0;0;0;1}</text>
<text class="m" x="1332.50" y="299.50" font-size="15" fill="#262618" stroke="#fbf55b" stroke-width="0.2" text-anchor="middle">0</text>
<text class="m" x="1345.00" y="299.50" font-size="15" fill="#262618" stroke="#fbf55b" stroke-width="0.2" text-anchor="start">21000</text>
</g>
<path d="M7.10 52.50 H244.60 V75.60 H133.60 L126.40 83.90 L119.20 75.60 H7.10 Z" fill="url(#tip)" stroke="#1c1c1c" stroke-width="1.6" stroke-linejoin="miter"/>
<text x="17.50" y="68.80" font-size="15" fill="#222" textLength="221.00" lengthAdjust="spacingAndGlyphs">Disassemble Model (Karamba3D)</text>
<path d="M242.60 24.80 H486.90 V47.90 H372.00 L364.80 56.00 L357.60 47.90 H242.60 Z" fill="url(#tip)" stroke="#1c1c1c" stroke-width="1.6" stroke-linejoin="miter"/>
<text x="248.50" y="41.10" font-size="15" fill="#222" textLength="232.00" lengthAdjust="spacingAndGlyphs">Disassemble Element (Karamba3D)</text>
<path d="M693.60 11.00 H974.30 V34.00 H841.20 L834.00 42.40 L826.80 34.00 H693.60 Z" fill="url(#tip)" stroke="#1c1c1c" stroke-width="1.6" stroke-linejoin="miter"/>
<text x="699.60" y="27.50" font-size="15" fill="#222" textLength="268.00" lengthAdjust="spacingAndGlyphs">Disassemble Cross Section (Karamba3D)</text>
<path d="M1073.00 11.00 H1318.80 V34.00 H1203.30 L1196.10 42.40 L1188.90 34.00 H1073.00 Z" fill="url(#tip)" stroke="#1c1c1c" stroke-width="1.6" stroke-linejoin="miter"/>
<text x="1079.40" y="27.50" font-size="15" fill="#222" textLength="233.00" lengthAdjust="spacingAndGlyphs">Disassemble Material (Karamba3D)</text>
</svg></body></html>
